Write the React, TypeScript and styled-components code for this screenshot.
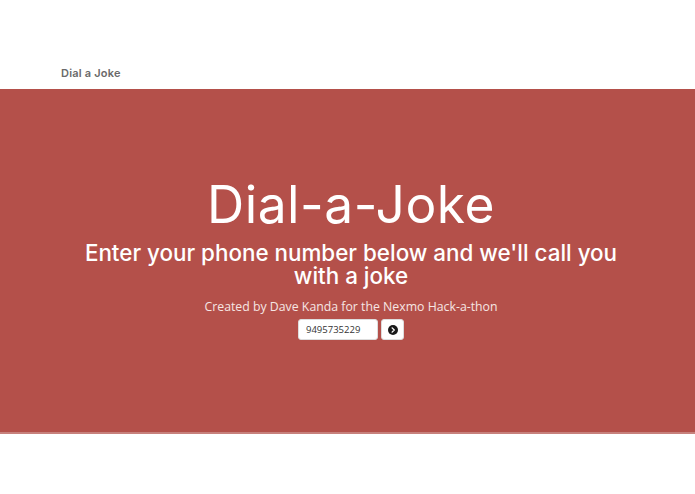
import styled, { createGlobalStyle } from 'styled-components';

const GlobalStyle = createGlobalStyle`
  html, body {
    margin: 0;
    padding: 0;
    background: #ffffff;
  }
  * {
    box-sizing: border-box;
  }
`;

const HeaderFont = `'Inter', 'DejaVu Sans', sans-serif`;
const BodyFont = `'Open Sans', 'Noto Sans', sans-serif`;

const App = () => {
  return (
    <Page>
      <GlobalStyle />
      <NavBar>
        <Brand>Dial a Joke</Brand>
      </NavBar>
      <Hero>
        <Title>Dial-a-Joke</Title>
        <Lead>Enter your phone number below and we'll call you with a joke</Lead>
        <Credit>Created by Dave Kanda for the Nexmo Hack-a-thon</Credit>
        <DialForm onSubmit={(e) => e.preventDefault()}>
          <PhoneInput type="text" defaultValue="9495735229" />
          <GoButton type="submit">
            <svg width="10" height="10" viewBox="0 0 16 16">
              <circle cx="8" cy="8" r="8" fill="#1a1a1a" />
              <path d="M6.6 4.6 L10 8 L6.6 11.4" stroke="#fff" strokeWidth="2.2" fill="none" strokeLinecap="round" strokeLinejoin="round" />
            </svg>
          </GoButton>
        </DialForm>
      </Hero>
    </Page>
  );
};

export default App;

const Page = styled.div`
  width: 100%;
  min-height: 494px;
  background: #fff;
`;

const NavBar = styled.header`
  height: 89px;
  display: flex;
  align-items: flex-end;
  padding: 0 0 9px 61px;
`;

const Brand = styled.span`
  font-family: ${HeaderFont};
  font-size: 11px;
  font-weight: 600;
  color: #6a6a6a;
  letter-spacing: 0.2px;
`;

const Hero = styled.section`
  height: 345px;
  background: #b4504a;
  border-bottom: 2px solid #c7817c;
  display: flex;
  flex-direction: column;
  align-items: center;
  padding: 85px 0 0 7px;
  color: #fff;
  text-align: center;
`;

const Title = styled.h1`
  margin: 0;
  font-family: ${HeaderFont};
  font-weight: 400;
  font-size: 51.5px;
  line-height: 60px;
  letter-spacing: 0.5px;
`;

const Lead = styled.h2`
  margin: 7px 0 0;
  max-width: 560px;
  font-family: ${HeaderFont};
  font-weight: 500;
  font-size: 22.4px;
  line-height: 23px;
`;

const Credit = styled.p`
  margin: 11px 0 0;
  font-family: ${BodyFont};
  font-size: 12.3px;
  color: #f6e6e4;
`;

const DialForm = styled.form`
  display: flex;
  gap: 3px;
  margin-top: 4px;
`;

const PhoneInput = styled.input`
  width: 80px;
  height: 21px;
  border: 1px solid #ddd;
  border-radius: 3px;
  padding: 0 7px;
  font-family: ${BodyFont};
  font-size: 9.5px;
  color: #333;
  outline: none;
`;

const GoButton = styled.button`
  width: 23px;
  height: 21px;
  border: 1px solid #ddd;
  border-radius: 3px;
  background: #fff;
  padding: 0;
  display: flex;
  align-items: center;
  justify-content: center;
  cursor: pointer;
`;
